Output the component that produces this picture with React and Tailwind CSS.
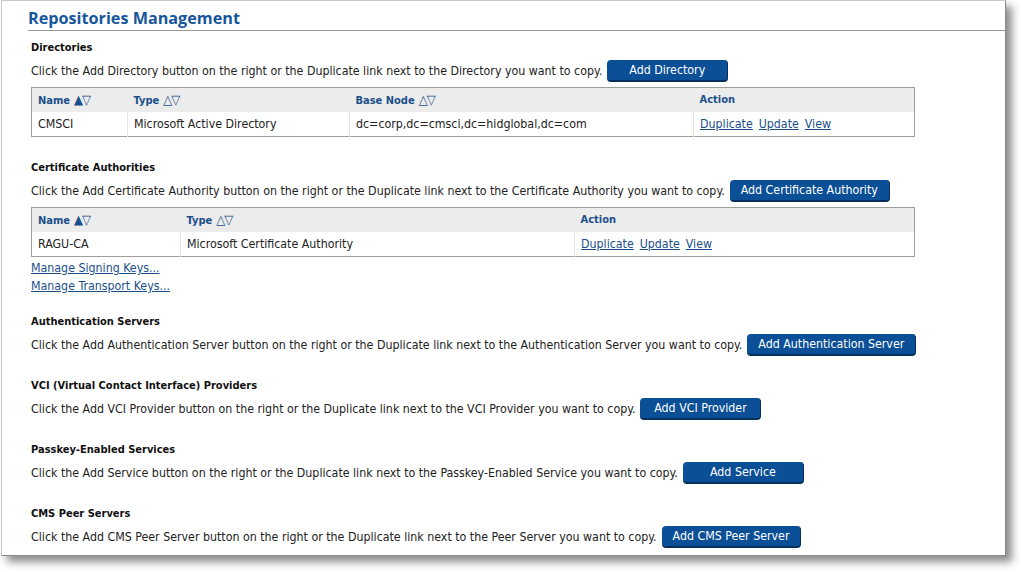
import React from "react";

const body = "font-['DejaVu_Sans_Condensed','DejaVu_Sans',sans-serif] [font-stretch:condensed]";

function AddButton({ label }) {
  return (
    <button className="ml-[5px] h-[22px] min-w-[121px] px-[11px] flex items-center justify-center rounded-[4px] bg-[#0b4f96] border-b-2 border-r border-[#062f5c] text-white text-[12.3px]">
      {label}
    </button>
  );
}

function Sort({ up }) {
  return (
    <span className="ml-[4px] text-[13px] tracking-[-1px] font-normal">
      {up ? "▲" : "△"}▽
    </span>
  );
}

function Section({ title, text, button, className = "", children }) {
  return (
    <div className={className}>
      <div className="text-[11px] leading-[14px] font-bold text-[#111]">{title}</div>
      <div className="mt-[5px] flex items-center h-[22px] text-[12.3px] text-[#222]">
        <span>{text}</span>
        <AddButton label={button} />
      </div>
      {children}
    </div>
  );
}

function Links() {
  return (
    <>
      <a href="#" className="underline">Duplicate</a>
      <a href="#" className="underline ml-[6px]">Update</a>
      <a href="#" className="underline ml-[6px]">View</a>
    </>
  );
}

export default function App() {
  return (
    <div className={"w-[1021px] h-[572px] bg-white " + body}>
      <div className="ml-[1px] w-[1005px] h-[556px] bg-white border-l border-t border-[#c9c9c9] border-r border-b border-r-[#8a8a8a] border-b-[#8a8a8a] shadow-[6px_6px_8px_rgba(0,0,0,0.45)]">
        {/* TITLE */}
        <div className="ml-[26px] pt-[6px] h-[30px] border-b border-[#9a9a9a] font-['Open_Sans',sans-serif] text-[16.2px] leading-[22px] font-bold text-[#17569b] [font-stretch:normal]">
          Repositories Management
        </div>

        <div className="pl-[29px] pt-[10px]">
          {/* DIRECTORIES */}
          <Section
            title="Directories"
            text="Click the Add Directory button on the right or the Duplicate link next to the Directory you want to copy."
            button="Add Directory"
          >
            <table className="mt-[5px] w-[884px] border border-[#9d9d9d] text-[12.3px] border-collapse">
              <thead>
                <tr className="bg-[#ececec] h-[24px] text-left text-[#1b4f8a] font-bold text-[11px]">
                  <th className="pl-[6px] w-[96px]">Name<Sort up /></th>
                  <th className="pl-[6px] w-[222px]">Type<Sort /></th>
                  <th className="pl-[6px] w-[344px]">Base Node<Sort /></th>
                  <th className="pl-[6px]">Action</th>
                </tr>
              </thead>
              <tbody>
                <tr className="h-[25px] text-[#222]">
                  <td className="pl-[6px]">CMSCI</td>
                  <td className="pl-[6px] border-l border-[#e4e4e4]">Microsoft Active Directory</td>
                  <td className="pl-[6px] border-l border-[#e4e4e4]">dc=corp,dc=cmsci,dc=hidglobal,dc=com</td>
                  <td className="pl-[6px] border-l border-[#e4e4e4] text-[#1b4f8a]"><Links /></td>
                </tr>
              </tbody>
            </table>
          </Section>

          {/* CERTIFICATE AUTHORITIES */}
          <Section
            className="mt-[24px]"
            title="Certificate Authorities"
            text="Click the Add Certificate Authority button on the right or the Duplicate link next to the Certificate Authority you want to copy."
            button="Add Certificate Authority"
          >
            <table className="mt-[5px] w-[884px] border border-[#9d9d9d] text-[12.3px] border-collapse">
              <thead>
                <tr className="bg-[#ececec] h-[24px] text-left text-[#1b4f8a] font-bold text-[11px]">
                  <th className="pl-[6px] w-[149px]">Name<Sort up /></th>
                  <th className="pl-[6px] w-[394px]">Type<Sort /></th>
                  <th className="pl-[6px]">Action</th>
                </tr>
              </thead>
              <tbody>
                <tr className="h-[25px] text-[#222]">
                  <td className="pl-[6px]">RAGU-CA</td>
                  <td className="pl-[6px] border-l border-[#e4e4e4]">Microsoft Certificate Authority</td>
                  <td className="pl-[6px] border-l border-[#e4e4e4] text-[#1b4f8a]"><Links /></td>
                </tr>
              </tbody>
            </table>
            <div className="mt-[2px] flex flex-col items-start text-[12.3px] leading-[18px] text-[#1b4f8a]">
              <a href="#" className="underline">Manage Signing Keys...</a>
              <a href="#" className="underline">Manage Transport Keys...</a>
            </div>
          </Section>

          <Section
            className="mt-[20px]"
            title="Authentication Servers"
            text="Click the Add Authentication Server button on the right or the Duplicate link next to the Authentication Server you want to copy."
            button="Add Authentication Server"
          />

          <Section
            className="mt-[23px]"
            title="VCI (Virtual Contact Interface) Providers"
            text="Click the Add VCI Provider button on the right or the Duplicate link next to the VCI Provider you want to copy."
            button="Add VCI Provider"
          />

          <Section
            className="mt-[23px]"
            title="Passkey-Enabled Services"
            text="Click the Add Service button on the right or the Duplicate link next to the Passkey-Enabled Service you want to copy."
            button="Add Service"
          />

          <Section
            className="mt-[23px]"
            title="CMS Peer Servers"
            text="Click the Add CMS Peer Server button on the right or the Duplicate link next to the Peer Server you want to copy."
            button="Add CMS Peer Server"
          />
        </div>
      </div>
    </div>
  );
}
